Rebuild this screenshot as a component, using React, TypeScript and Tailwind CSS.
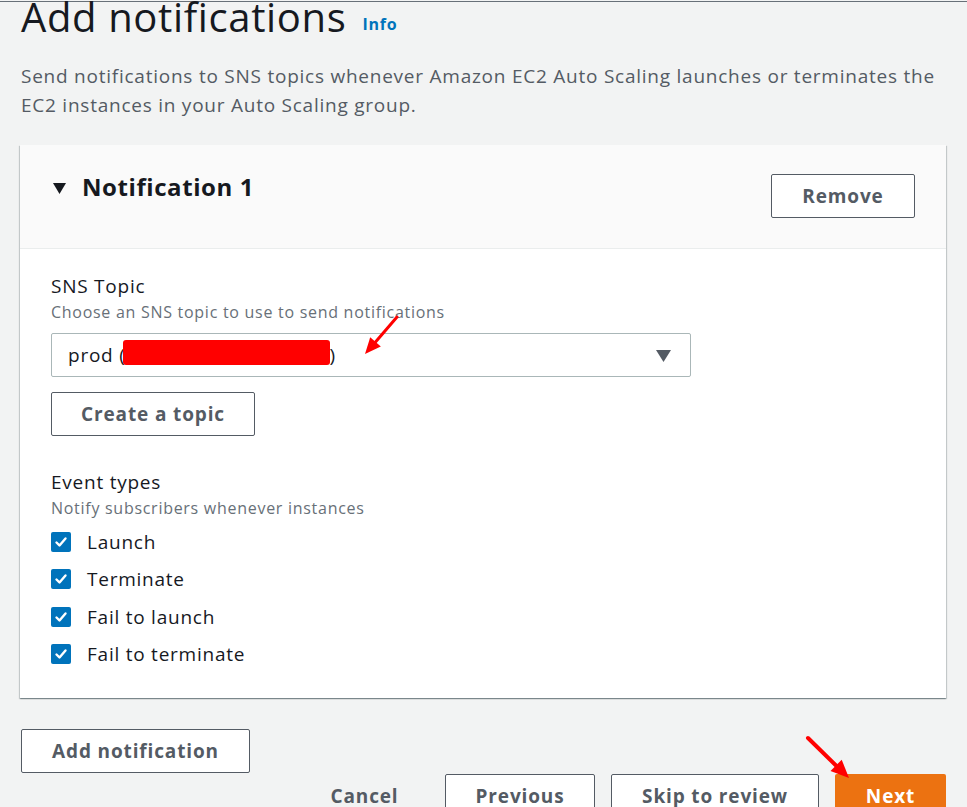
import React from 'react';

const events = ['Launch', 'Terminate', 'Fail to launch', 'Fail to terminate'];

function OutlineButton({ label, className }: { label: string; className: string }) {
    return (
        <button
            className={`flex h-[44px] items-center justify-center rounded-[2px] border border-[#545b64] bg-white text-[19px] font-bold tracking-[0.045em] text-[#545b64] ${className}`}
        >
            {label}
        </button>
    );
}

function CheckRow({ label }: { label: string }) {
    return (
        <div className="flex h-[24px] items-center">
            <span className="flex h-[20px] w-[20px] items-center justify-center rounded-[2px] bg-[#0073bb]">
                <svg width="14" height="14" viewBox="0 0 14 14">
                    <polyline points="2.5,7.5 5.5,10.5 11.5,3.5" fill="none" stroke="white" strokeWidth="2.4" strokeLinecap="round" strokeLinejoin="round" />
                </svg>
            </span>
            <span className="ml-[16px] text-[19px] leading-[24px] tracking-[0.04em] text-[#16191f]">{label}</span>
        </div>
    );
}

export default function App() {
    return (
        <div className="relative h-[807px] w-full overflow-hidden bg-[#f2f3f3] font-['Open_Sans',sans-serif]">
            <div className="mt-px h-px bg-[#687078]" />

            <div className="pl-[20px] pr-[21px]">
                {/* Page header */}
                <div className="flex h-[30px] items-baseline pl-px">
                    <h1 className="text-[40px] font-normal leading-[30px] tracking-[0.016em] text-[#16191f]">Add notifications</h1>
                    <span className="relative -top-[2px] ml-[16px] text-[16px] font-bold tracking-[0.05em] text-[#0073bb]">Info</span>
                </div>
                <p className="mt-[30px] whitespace-nowrap pl-px text-[19px] leading-[29px] tracking-[0.04em] text-[#545b64]">
                    Send notifications to SNS topics whenever Amazon EC2 Auto Scaling launches or terminates the
                    <br />
                    EC2 instances in your Auto Scaling group.
                </p>

                {/* Notification card */}
                <div className="mt-[25px] bg-white shadow-[0_1px_1px_0_rgba(0,28,36,0.3),1px_1px_1px_0_rgba(0,28,36,0.15),-1px_1px_1px_0_rgba(0,28,36,0.15)]">
                    <div className="flex items-start justify-between border-b border-[#eaeded] bg-[#fafafa] px-[31px] pb-[30px] pt-[26px]">
                        <div className="flex h-[32px] items-center">
                            <svg width="13" height="12" viewBox="0 0 13 12" className="ml-[2px] mt-[3px]">
                                <polygon points="0,0 13,0 6.5,11" fill="#16191f" />
                            </svg>
                            <span className="ml-[16px] text-[24px] font-bold leading-[32px] tracking-[0.024em] text-[#16191f]">Notification 1</span>
                        </div>
                        <OutlineButton label="Remove" className="mt-[3px] w-[144px]" />
                    </div>

                    <div className="px-[31px] pb-[32px] pt-[25px]">
                        <div className="text-[19px] leading-[24px] tracking-[0.04em] text-[#16191f]">SNS Topic</div>
                        <div className="mt-1 text-[16px] leading-[20px] tracking-[0.045em] text-[#687078]">Choose an SNS topic to use to send notifications</div>
                        <div className="mt-[11px] flex h-[44px] w-[640px] items-center justify-between rounded-[2px] border border-[#aab7b8] pl-[16px] pr-[19px]">
                            <div className="flex items-center text-[19px] tracking-[0.04em] text-[#16191f]">
                                <span>prod (</span>
                                <span className="relative -top-[3px] -ml-[3px] inline-block h-[25px] w-[207px] rounded-[3px] bg-[#ff0000]" />
                                <span>)</span>
                            </div>
                            <svg width="15" height="12" viewBox="0 0 15 12" className="mt-px">
                                <polygon points="0,0 15,0 7.5,12" fill="#545b64" />
                            </svg>
                        </div>
                        <OutlineButton label="Create a topic" className="mt-[15px] w-[204px]" />

                        <div className="mt-[34px] text-[19px] leading-[24px] tracking-[0.04em] text-[#16191f]">Event types</div>
                        <div className="mt-1 text-[16px] leading-[20px] tracking-[0.045em] text-[#687078]">Notify subscribers whenever instances</div>
                        <div className="mt-[11.5px] flex flex-col gap-[13.5px]">
                            {events.map((e) => (
                                <CheckRow key={e} label={e} />
                            ))}
                        </div>
                    </div>
                </div>

                <OutlineButton label="Add notification" className="ml-px mt-[31px] w-[229px]" />

                {/* Wizard actions */}
                <div className="mt-px flex justify-end gap-[16px]">
                    <button className="flex h-[44px] w-[129px] items-center justify-center text-[19px] font-bold tracking-[0.045em] text-[#545b64]">Cancel</button>
                    <OutlineButton label="Previous" className="w-[150px]" />
                    <OutlineButton label="Skip to review" className="w-[208px]" />
                    <button className="flex h-[44px] w-[111px] items-center justify-center rounded-[2px] bg-[#ec7211] text-[19px] font-bold tracking-[0.045em] text-white">Next</button>
                </div>
            </div>

            {/* red annotation arrows */}
            <svg className="pointer-events-none absolute left-0 top-0" width="967" height="807" viewBox="0 0 967 807">
                <line x1="397" y1="317" x2="375.5" y2="342" stroke="#ff0000" strokeWidth="3" strokeLinecap="round" />
                <polygon points="365,354 380.8,346.5 370.2,337.3" fill="#ff0000" />
                <line x1="808" y1="738" x2="836" y2="765.5" stroke="#ff0000" strokeWidth="4" strokeLinecap="round" />
                <polygon points="849,778 830.5,771.1 841.7,759.7" fill="#ff0000" />
            </svg>
        </div>
    );
}
